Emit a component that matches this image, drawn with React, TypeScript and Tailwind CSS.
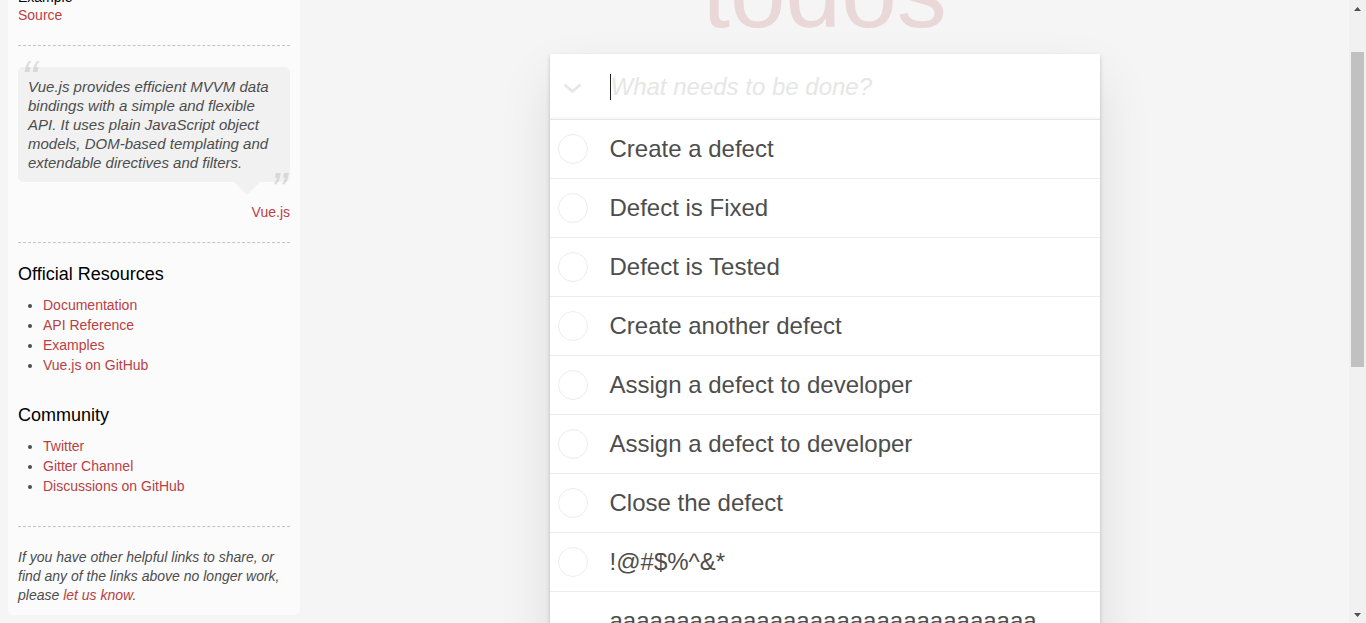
import React from "react";

const items = [
  "Create a defect",
  "Defect is Fixed",
  "Defect is Tested",
  "Create another defect",
  "Assign a defect to developer",
  "Assign a defect to developer",
  "Close the defect",
  "!@#$%^&*",
  "a".repeat(80),
];

function Divider() {
  return <div className="h-0 my-[20px] border-t border-b border-dashed border-t-[#c5c5c5] border-b-[#f7f7f7]" />;
}

function Sidebar() {
  return (
    <aside className="ml-2 mt-2 w-[292px] shrink-0 p-[10px] rounded-[5px] bg-white/60">
      <header>
        <h3 className="my-[10px] text-[24px] leading-[1.2] font-medium text-black">Vue.js</h3>
        <div>
          <h5 className="mt-[10px] mb-0 text-[14px] leading-[1.2] font-medium text-black">Example</h5>
          <a className="text-[#b83f45]">Source</a>
        </div>
      </header>
      <Divider />
      <blockquote className="relative mt-[20px] mb-[60px] p-[10px] bg-black/[0.04] rounded-[5px]">
        <span className="absolute -top-[20px] left-[3px] text-[50px] leading-[65px] italic opacity-[0.15]">“</span>
        <p className="text-[15px] leading-[19px] italic">
          Vue.js provides efficient MVVM data bindings with a simple and flexible API. It uses plain JavaScript object models, DOM-based templating and extendable directives and filters.
        </p>
        <span className="absolute -bottom-[42px] right-[3px] text-[50px] leading-[65px] italic opacity-[0.15]">”</span>
        <span className="absolute top-full right-[30px] w-0 h-0 border-[13px] border-transparent border-t-black/[0.04]" />
        <footer className="absolute -bottom-[40px] right-0">
          <a className="ml-[5px] text-[#b83f45]">Vue.js</a>
        </footer>
      </blockquote>
      <Divider />
      <h4 className="my-[10px] text-[18px] leading-[21px] font-medium text-black">Official Resources</h4>
      <ul className="list-disc ml-[25px] mb-[30px] p-0">
        {["Documentation", "API Reference", "Examples", "Vue.js on GitHub"].map((t) => (
          <li key={t} className="leading-[20px]">
            <a className="text-[#b83f45]">{t}</a>
          </li>
        ))}
      </ul>
      <h4 className="my-[10px] text-[18px] leading-[21px] font-medium text-black">Community</h4>
      <ul className="list-disc ml-[25px] mb-[30px] p-0">
        {["Twitter", "Gitter Channel", "Discussions on GitHub"].map((t) => (
          <li key={t} className="leading-[20px]">
            <a className="text-[#b83f45]">{t}</a>
          </li>
        ))}
      </ul>
      <footer className="leading-[19px]">
        <Divider />
        <em>
          If you have other helpful links to share, or find any of the links above no longer work, please{" "}
          <a className="text-[#b83f45]">let us know</a>.
        </em>
      </footer>
    </aside>
  );
}

function TodoApp() {
  return (
    <div className="flex-1 min-w-0 flex justify-center pt-[20px]">
      <section className="w-[550px]">
        <h1 className="h-[100px] mb-[12px] text-center text-[100px] leading-[100px] font-thin text-[rgba(175,47,47,0.15)]">
          todos
        </h1>
        <div className="bg-white shadow-[0_2px_4px_0_rgba(0,0,0,0.2),0_25px_50px_0_rgba(0,0,0,0.1)]">
          <div className="h-[65px] flex items-center shadow-[inset_0_-2px_1px_rgba(0,0,0,0.03)]">
            <div className="w-[45px] flex justify-center pt-[2px]">
              <svg width="19" height="10" viewBox="0 0 19 10">
                <polyline points="1.5,1.5 9.5,8.5 17.5,1.5" fill="none" stroke="#e6e6e6" strokeWidth="2.6" />
              </svg>
            </div>
            <div className="ml-[15px] flex items-center">
              <div className="w-px h-[26px] bg-[#222]" />
              <span className="text-[24px] italic text-[#e6e6e6]">What needs to be done?</span>
            </div>
          </div>
          <ul className="border-t border-[#e6e6e6]">
            {items.map((t, i) => (
              <li key={i} className="flex items-center border-b border-[#ededed] text-[24px] text-[#4d4d4d]">
                <div className="ml-[8px] w-[30px] h-[30px] shrink-0 rounded-full border border-[#ededed]" />
                <label className="flex-1 min-w-0 pl-[22px] pr-[60px] py-[15px] leading-[28px] break-all">{t}</label>
              </li>
            ))}
          </ul>
        </div>
      </section>
    </div>
  );
}

function Scrollbar() {
  return (
    <div className="w-[17px] shrink-0 h-full bg-[#f1f1f1] flex flex-col">
      <div className="h-[17px] flex items-center justify-center">
        <svg width="7" height="4" viewBox="0 0 7 4">
          <polygon points="0,4 3.5,0 7,4" fill="#505050" />
        </svg>
      </div>
      <div className="h-[35px]" />
      <div className="px-[2px]">
        <div className="h-[315px] bg-[#c1c1c1]" />
      </div>
      <div className="flex-1" />
      <div className="h-[17px] flex items-center justify-center">
        <svg width="7" height="4" viewBox="0 0 7 4">
          <polygon points="0,0 3.5,4 7,0" fill="#505050" />
        </svg>
      </div>
    </div>
  );
}

export default function App() {
  return (
    <div className="w-[1366px] h-[623px] overflow-hidden flex bg-[#f5f5f5] font-['Liberation_Sans',Arial,sans-serif] text-[14px] leading-[1.4] text-[#4d4d4d]">
      <div className="flex-1 min-w-0 h-full overflow-hidden">
        {/* page scrolled down by 78px */}
        <div className="-mt-[78px] flex items-start">
          <Sidebar />
          <TodoApp />
        </div>
      </div>
      <Scrollbar />
    </div>
  );
}
